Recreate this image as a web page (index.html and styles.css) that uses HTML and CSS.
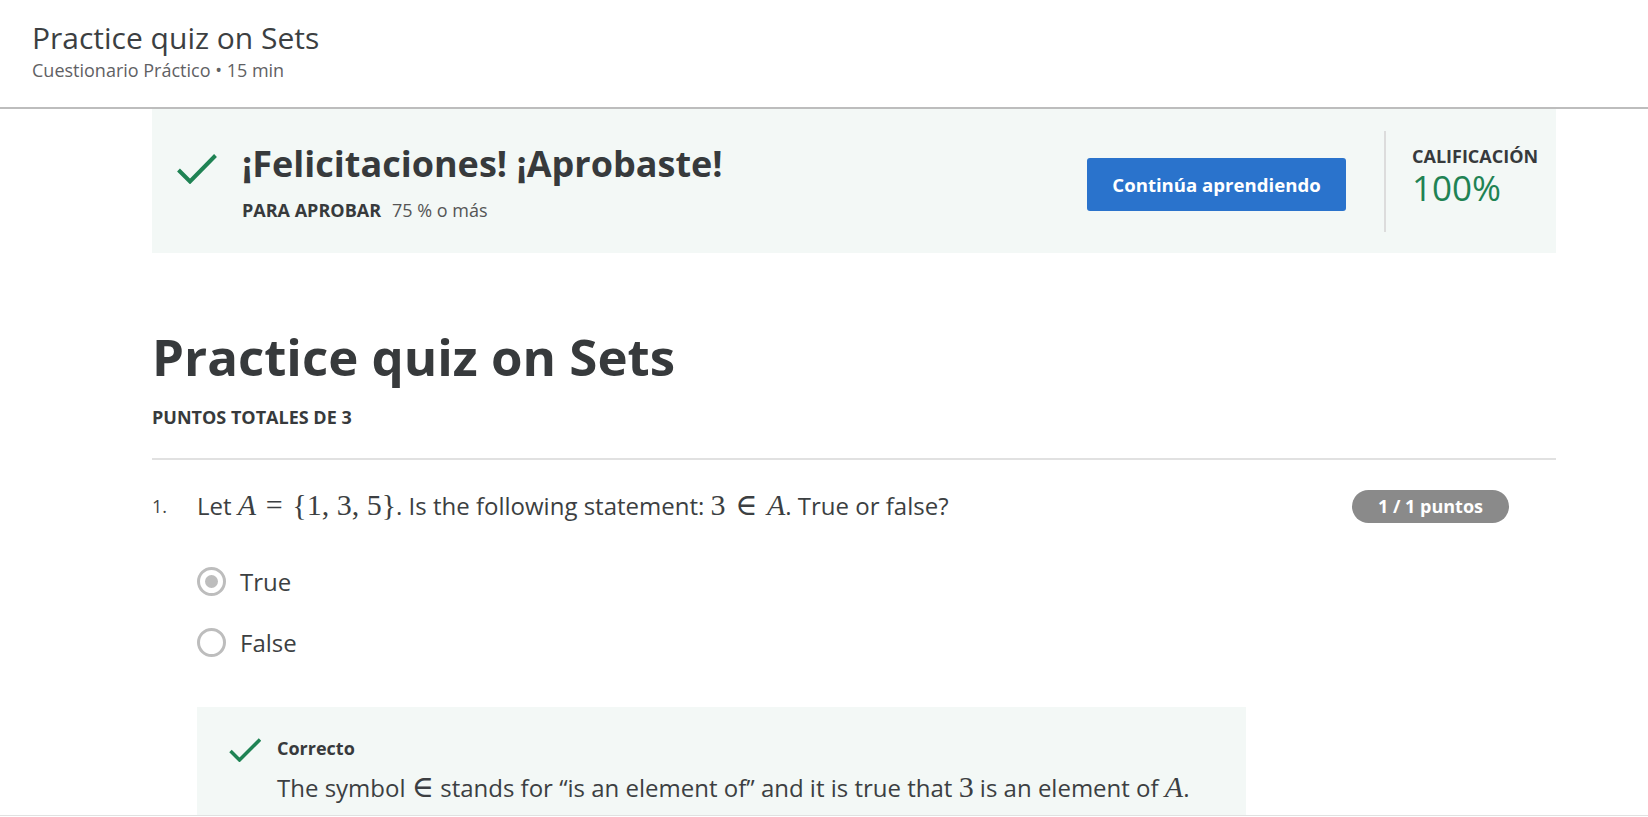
FILE: index.html
```html
<!DOCTYPE html>
<html lang="es">
<head>
<meta charset="utf-8">
<title>Practice quiz on Sets</title>
<link rel="stylesheet" href="styles.css">
</head>
<body>
<div class="viewport">
  <header class="topbar">
    <h1 class="topbar-title">Practice quiz on Sets</h1>
    <div class="topbar-sub">Cuestionario Práctico • 15 min</div>
  </header>
  <main class="content">
    <section class="banner">
      <div class="banner-main">
        <svg class="check-lg" viewBox="0 0 40 30" width="40" height="30"><polyline points="1.5,16 13,27.5 38.5,1.5" fill="none" stroke="#1f8354" stroke-width="4"/></svg>
        <div class="banner-text">
          <div class="banner-title">¡Felicitaciones! ¡Aprobaste!</div>
          <div class="banner-pass"><span class="pass-label">PARA APROBAR</span><span class="pass-value">75 % o más</span></div>
        </div>
      </div>
      <button class="btn-continue">Continúa aprendiendo</button>
      <div class="grade">
        <div class="grade-label">CALIFICACIÓN</div>
        <div class="grade-value">100%</div>
      </div>
    </section>

    <h2 class="quiz-title">Practice quiz on Sets</h2>
    <div class="quiz-points">PUNTOS TOTALES DE 3</div>
    <hr class="sep">

    <section class="question">
      <div class="q-head">
        <span class="q-num">1.</span>
        <div class="q-text">Let <span class="m"><i>A</i><span class="rel">=</span>{1, 3, 5}</span>. Is the following statement: <span class="m">3<span class="rel">∈</span><i>A</i></span>. True or false?</div>
        <span class="badge">1 / 1 puntos</span>
      </div>
      <div class="options">
        <div class="option"><span class="radio checked"></span><span class="opt-label">True</span></div>
        <div class="option"><span class="radio"></span><span class="opt-label">False</span></div>
      </div>
      <div class="feedback">
        <svg class="check-sm" viewBox="0 0 32 24" width="32" height="24"><polyline points="1.5,13 10.5,22 31,1.5" fill="none" stroke="#1f8354" stroke-width="3.5"/></svg>
        <div class="fb-body">
          <div class="fb-title">Correcto</div>
          <p class="fb-text">The symbol <span class="m">∈</span> stands for “is an element of” and it is true that <span class="m">3</span> is an element of <span class="m"><i>A</i></span>.</p>
        </div>
      </div>
    </section>
  </main>
</div>
</body>
</html>
```
FILE: styles.css
```css
* { box-sizing: border-box; }
html, body { margin: 0; padding: 0; background: #fff; }
body {
  font-family: "Open Sans", "Noto Sans", "Liberation Sans", sans-serif;
  color: #373a3c;
}
.viewport {
  height: 816px;
  overflow: hidden;
  border-bottom: 1px solid #e1e1e1;
}
.topbar {
  height: 109px;
  padding: 18px 0 0 32px;
  border-bottom: 2px solid #bdbdbd;
}
.topbar-title {
  margin: 0;
  font-size: 30px;
  font-weight: 400;
  line-height: 40px;
  color: #3c3f42;
}
.topbar-sub {
  font-size: 18px;
  line-height: 24px;
  color: #5f6164;
}
.content {
  margin-left: 152px;
  width: 1404px;
}
.banner {
  height: 144px;
  background: #f3f8f6;
  display: flex;
  align-items: center;
}
.banner-main {
  flex: 1;
  display: flex;
  align-items: flex-start;
  padding-left: 25px;
}
.check-lg { margin-top: 14px; flex: none; }
.banner-text { margin-left: 25px; }
.banner-title {
  font-size: 36px;
  font-weight: 700;
  line-height: 48px;
  color: #373a3c;
}
.banner-pass {
  margin-top: 10px;
  font-size: 18px;
  line-height: 24px;
}
.pass-label { font-weight: 700; margin-right: 11px; }
.pass-value { color: #555; }
.btn-continue {
  width: 259px;
  height: 53px;
  margin-top: 7px;
  background: #2a73cc;
  color: #fff;
  border: 0;
  border-radius: 3px;
  font-family: inherit;
  font-size: 18.6px;
  font-weight: 700;
}
.grade {
  margin-left: 38px;
  width: 172px;
  height: 101px;
  border-left: 2px solid #dcdcdc;
  padding: 13px 0 0 26px;
}
.grade-label {
  font-size: 18px;
  font-weight: 700;
  line-height: 24px;
}
.grade-value {
  font-size: 35px;
  line-height: 40px;
  color: #1f8354;
}
.quiz-title {
  margin: 70px 0 0;
  font-size: 51px;
  font-weight: 700;
  line-height: 66px;
  color: #373a3c;
}
.quiz-points {
  margin-top: 16px;
  font-size: 18px;
  font-weight: 700;
  line-height: 24px;
}
.sep {
  margin: 29px 0 0;
  border: 0;
  border-top: 2px solid #e1e1e1;
}
.question { padding-top: 29px; }
.q-head {
  display: flex;
  align-items: center;
  height: 34px;
}
.q-num {
  width: 45px;
  font-size: 18px;
  color: #444;
}
.q-text {
  flex: 1;
  font-size: 24px;
  line-height: 32px;
  color: #3c3f42;
}
.m {
  font-family: "Liberation Serif", "DejaVu Serif", serif;
  font-size: 30px;
  line-height: 1;
}
.m i { font-style: italic; }
.rel { margin: 0 0.32em; }
.badge {
  margin-right: 47px;
  width: 157px;
  height: 33px;
  border-radius: 17px;
  background: #8a8a8a;
  color: #fff;
  font-size: 18px;
  font-weight: 700;
  line-height: 33px;
  text-align: center;
}
.options {
  margin: 44px 0 0 45px;
  display: flex;
  flex-direction: column;
  gap: 33px;
}
.option {
  display: flex;
  align-items: center;
  height: 28px;
}
.radio {
  width: 29px;
  height: 29px;
  border: 3px solid #bdbdbd;
  border-radius: 50%;
  display: flex;
  align-items: center;
  justify-content: center;
}
.radio.checked::after {
  content: "";
  width: 13px;
  height: 13px;
  border-radius: 50%;
  background: #bdbdbd;
}
.opt-label {
  margin-left: 14px;
  font-size: 24px;
  color: #3c3f42;
}
.feedback {
  margin: 51px 0 0 45px;
  width: 1049px;
  min-height: 200px;
  background: #f3f8f6;
  padding: 29px 0 0 32px;
  display: flex;
  align-items: flex-start;
}
.check-sm { flex: none; margin-top: 2px; }
.fb-body { margin-left: 16px; }
.fb-title {
  font-size: 18px;
  font-weight: 700;
  line-height: 24px;
}
.fb-text {
  margin: 11px 0 0;
  font-size: 24px;
  line-height: 34px;
  color: #3c3f42;
}
```
